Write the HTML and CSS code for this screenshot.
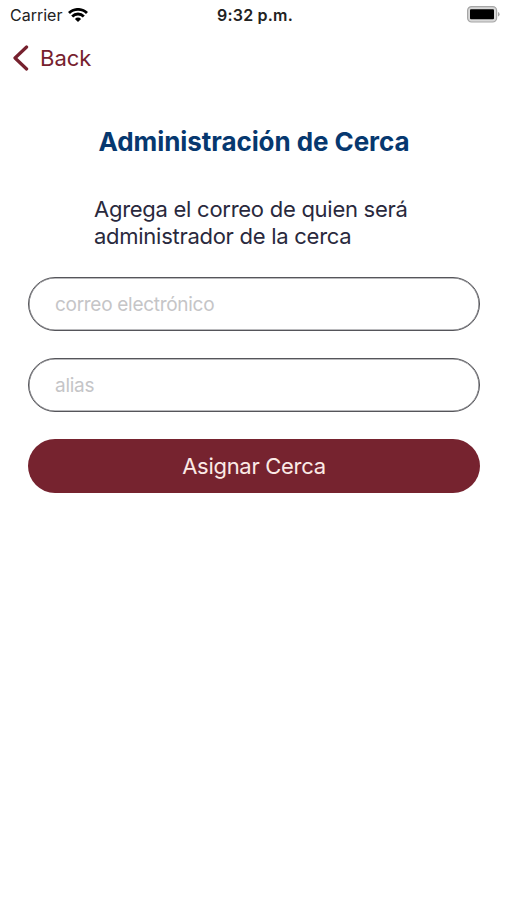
FILE: index.html
```
<!DOCTYPE html>
<html lang="es">
<head>
    <meta charset="UTF-8">
    <title>Administración de Cerca</title>
    <link rel="stylesheet" href="styles.css">
</head>
<body>
    <div class="status-bar">
        <div class="carrier">
            <span>Carrier</span>
            <svg class="wifi" viewBox="0 0 20 14">
                <path d="M10 14 L6.9 10.9 A4.4 4.4 0 0 1 13.1 10.9 Z"/>
                <path class="arc" d="M4.2 8.4 A8.2 8.2 0 0 1 15.8 8.4"/>
                <path class="arc" d="M1 5.1 A12.7 12.7 0 0 1 19 5.1"/>
            </svg>
        </div>
        <div class="time">9:32 p.m.</div>
        <div class="battery-wrap">
            <svg class="battery" viewBox="0 0 33 17">
                <rect class="case" x="0.6" y="0.6" width="29" height="15.4" rx="4"/>
                <rect x="3" y="3.3" width="24" height="10"  rx="1"/>
                <path class="cap" d="M31 6 Q32.6 6.6 32.6 8.3 Q32.6 10 31 10.6 Z"/>
            </svg>
        </div>
    </div>

    <div class="nav-bar">
        <a class="back" href="#">
            <svg class="chevron" viewBox="0 0 17 26">
                <path d="M14.6 2 L3 13 L14.6 24"/>
            </svg>
            <span>Back</span>
        </a>
    </div>

    <form class="content">
        <h1>Administración de Cerca</h1>
        <p>Agrega el correo de quien será administrador de la cerca</p>
        <input type="email" placeholder="correo electrónico">
        <input type="text" placeholder="alias">
        <button type="button">Asignar Cerca</button>
    </form>
</body>
</html>
```
FILE: styles.css
```
* {
    box-sizing: border-box;
}
body {
    margin: 0;
    background-color: #fff;
    font-family: Inter, "Liberation Sans", sans-serif;
}
.status-bar {
    display: grid;
    grid-template-columns: 1fr auto 1fr;
    align-items: center;
    height: 29px;
    padding: 0 7px 0 10px;
    font-size: 16px;
    color: #222;
}
.carrier {
    display: flex;
    align-items: center;
    gap: 6px;
}
.wifi {
    width: 20px;
    height: 14px;
}
.wifi .arc {
    fill: none;
    stroke: #000;
    stroke-width: 2.8;
}
.time {
    font-weight: 600;
    letter-spacing: 0.2px;
}
.battery-wrap {
    display: flex;
    justify-content: flex-end;
}
.battery {
    width: 33px;
    height: 17px;
}
.battery .case {
    fill: #d8d8d8;
    stroke: #a6a6a6;
    stroke-width: 1.2;
}
.battery .cap {
    fill: #a6a6a6;
}

/* Navigation */
.nav-bar {
    height: 57px;
    padding: 0 12px;
}
.back {
    display: inline-flex;
    align-items: center;
    gap: 11px;
    height: 57px;
    font-size: 22px;
    color: #76212e;
    text-decoration: none;
}
.chevron {
    width: 17px;
    height: 26px;
    fill: none;
    stroke: #76212e;
    stroke-width: 3.2;
    stroke-linecap: round;
    stroke-linejoin: round;
}

/* Form */
.content {
    display: flex;
    flex-direction: column;
    padding: 41px 27px 0 28px;
}
h1 {
    margin: 0;
    font-size: 26px;
    line-height: 30px;
    font-weight: 700;
    letter-spacing: -0.07px;
    text-align: center;
    color: #06386f;
}
p {
    width: 320px;
    margin: 39px auto 27px;
    font-size: 22px;
    line-height: 27px;
    letter-spacing: -0.27px;
    color: #29293d;
}
input,
button {
    width: 100%;
    height: 54px;
    margin: 0 0 27px;
    border-radius: 27px;
    font-family: inherit;
    letter-spacing: -0.29px;
}
input {
    padding: 0 26px;
    border: 1px solid #55555a;
    box-shadow: inset 0 0 0 0.6px #77777c;
    background-color: #fff;
    font-size: 19px;
}
input::placeholder {
    color: #c5c5c7;
}
button {
    border: 0;
    background-color: #76232f;
    color: #fbeae6;
    font-size: 22px;
}
```
